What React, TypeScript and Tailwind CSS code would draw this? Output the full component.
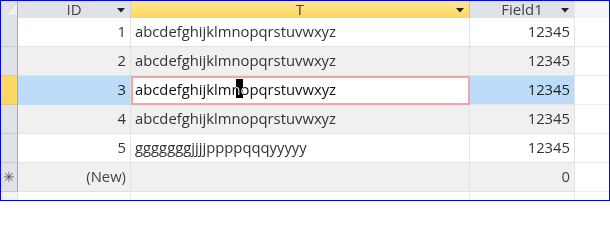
import React from "react";

const rows = [
  { id: "1", t: "abcdefghijklmnopqrstuvwxyz", f: "12345", bg: "bg-white" },
  { id: "2", t: "abcdefghijklmnopqrstuvwxyz", f: "12345", bg: "bg-[#f0f0f0]" },
  { id: "3", t: "abcdefghijklmnopqrstuvwxyz", f: "12345", bg: "bg-white", current: true },
  { id: "4", t: "abcdefghijklmnopqrstuvwxyz", f: "12345", bg: "bg-[#f0f0f0]" },
  { id: "5", t: "gggggggjjjjppppqqqyyyyy", f: "12345", bg: "bg-white" },
];

function Arrow() {
  return (
    <svg width="8" height="5" viewBox="0 0 8 5" className="absolute right-[5px] top-[7px]">
      <path d="M0 0 H8 L4 4.5 Z" fill="#222" />
    </svg>
  );
}

function Header() {
  return (
    <div className="flex h-[17px] text-[15px] leading-[17px] text-[#444]">
      <div className="relative w-[17px] bg-[#dfe2e8] border-r border-[#a7a9ad]">
        <svg width="12" height="12" viewBox="0 0 12 12" className="absolute left-[4px] top-[2px]">
          <path d="M12 0 L12 12 L0 12 Z" fill="#eef0f4" />
          <path d="M12 0 L0 12" stroke="#c9d3e2" strokeWidth="1" />
        </svg>
      </div>
      <div className="relative w-[113px] bg-[#dfe2e8] border-r border-[#d0d3d8] text-center">
        ID
        <Arrow />
      </div>
      <div className="relative w-[339px] bg-gradient-to-b from-[#fde98f] to-[#fdd65c] border-r border-[#e2c25a] text-center">
        T
        <Arrow />
      </div>
      <div className="relative w-[105px] bg-[#dfe2e8] border-r border-[#e4e6ea] text-center">
        Field1
        <Arrow />
      </div>
      <div className="flex-1 bg-[#f3f5fa]" />
    </div>
  );
}

function Row({ r }: any) {
  if (r.current) {
    return (
      <div className="flex h-[29px] text-[14.8px] text-[#222]">
        <div className="w-[17px] bg-[#fdd763] border-r border-[#a7a9ad] border-b border-b-[#e8c766]" />
        <div className="w-[113px] bg-[#bcdcfa] border-r border-[#d6dfe8] flex items-center justify-end pr-[4px] pb-[2px]">
          {r.id}
        </div>
        <div className="w-[339px] bg-white border-2 border-[#f4a3a8] flex items-center pl-[2px] pb-[2px] text-[#111]">
          <span>abcdefghijklmn</span>
          <span className="relative">
            o
            <span className="absolute left-[-5px] top-[1px] w-[7px] h-[19px] bg-white mix-blend-difference" />
          </span>
          <span>pqrstuvwxyz</span>
        </div>
        <div className="w-[105px] bg-[#bcdcfa] border-r border-b border-[#e4e6ea] flex items-center justify-end pr-[4px] pb-[2px]">
          {r.f}
        </div>
        <div className="flex-1 bg-white border-b border-[#ececec]" />
      </div>
    );
  }
  return (
    <div className="flex h-[29px] text-[14.8px] text-[#333]">
      <div className="w-[17px] bg-[#dfe2e8] border-r border-[#a7a9ad] border-b border-b-[#c8cbd0]" />
      <div className={`w-[113px] ${r.bg} border-r border-b border-[#e2e2e2] flex items-center justify-end pr-[4px] pb-[2px]`}>
        {r.id}
      </div>
      <div className={`w-[339px] ${r.bg} border-r border-b border-[#e2e2e2] flex items-center pl-[4px] pb-[2px]`}>
        {r.t}
      </div>
      <div className={`w-[105px] ${r.bg} border-r border-b border-[#e2e2e2] flex items-center justify-end pr-[4px] pb-[2px]`}>
        {r.f}
      </div>
      <div className="flex-1 bg-white border-b border-[#ececec]" />
    </div>
  );
}

export default function App() {
  return (
    <div
      className="w-[610px] h-[201px] border border-[#0000ff] bg-white overflow-hidden"
      style={{ fontFamily: "'Open Sans', 'Liberation Sans', sans-serif" }}
    >
      <Header />
      {rows.map((r, i) => (
        <Row key={i} r={r} />
      ))}
      <div className="flex h-[29px] text-[14.8px] text-[#444]">
        <div className="w-[17px] bg-[#dfe2e8] border-r border-[#a7a9ad] border-b border-b-[#c8cbd0] flex items-center justify-center pb-[2px] text-[#555] text-[14px]">
          ✳
        </div>
        <div className="w-[113px] bg-[#f0f0f0] border-r border-b border-[#e2e2e2] flex items-center justify-end pr-[4px] pb-[2px]">
          (New)
        </div>
        <div className="w-[339px] bg-[#f0f0f0] border-r border-b border-[#e2e2e2]" />
        <div className="w-[105px] bg-[#f0f0f0] border-r border-b border-[#e2e2e2] flex items-center justify-end pr-[4px] pb-[2px]">
          0
        </div>
        <div className="flex-1 bg-white border-b border-[#ececec]" />
      </div>
      <div className="flex h-[10px]">
        <div className="w-[17px] bg-[#f1f3f8] border-r border-[#e2e4ea]" />
        <div className="w-[113px] border-r border-[#ececec]" />
        <div className="w-[339px] border-r border-[#ececec]" />
        <div className="w-[105px] border-r border-[#ececec]" />
        <div className="flex-1" />
      </div>
    </div>
  );
}
